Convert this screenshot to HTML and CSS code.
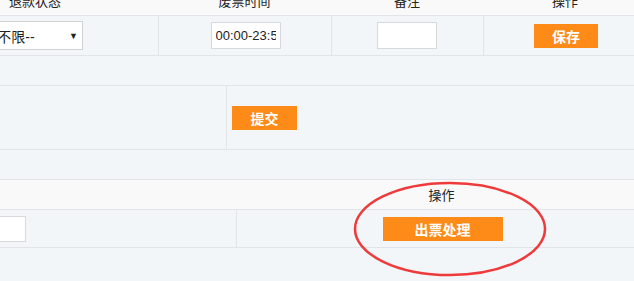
FILE: index.html
```html
<!DOCTYPE html>
<html>
<head>
    <meta charset="utf-8">
    <title>出票设置</title>
    <link rel="stylesheet" href="styles.css">
</head>
<body>
    <div class="page">
        <!-- 规则设置 -->
        <div class="grid grid-rule">
            <div class="cell head">退款状态</div>
            <div class="cell head">废票时间</div>
            <div class="cell head">备注</div>
            <div class="cell head">操作</div>

            <div class="cell row">
                <div class="fake-select"><span>--不限--</span><i>▼</i></div>
            </div>
            <div class="cell row line"><input class="ipt ipt-time" type="text" value="00:00-23:59"></div>
            <div class="cell row line"><input class="ipt ipt-note" type="text"></div>
            <div class="cell row line"><a class="btn btn-save">保存</a></div>
        </div>

        <!-- 提交 -->
        <div class="grid grid-submit">
            <div class="cell tall"></div>
            <div class="cell tall line left"><a class="btn btn-submit">提交</a></div>
        </div>

        <!-- 出票 -->
        <div class="grid grid-ticket">
            <div class="cell head"></div>
            <div class="cell head">操作</div>
            <div class="cell row2 right"><input class="ipt ipt-small" type="text"></div>
            <div class="cell row2 line"><a class="btn btn-ticket">出票处理</a></div>
        </div>
    </div>

    <!-- 标注圈 -->
    <svg class="mark" width="200" height="100" viewBox="0 0 200 100">
        <ellipse cx="97" cy="48" rx="95" ry="46" fill="none" stroke="#ee3a3a" stroke-width="2.5"/>
    </svg>
</body>
</html>
```

FILE: styles.css
```css
html {
    overflow: hidden;
}

body {
    margin: 0;
    min-height: 281px;
    background-color: #f3f6f9;
    font-family: "Liberation Sans", "Noto Sans CJK SC", sans-serif;
    font-size: 13px;
    color: #333;
    position: relative;
}

.page {
    width: 735px;
    margin: -14px 0 0 -88px;
}

.grid {
    display: grid;
    border-bottom: 1px solid #e1e4e8;
}

.grid-rule {
    grid-template-columns: 246px 173px 152px 164px;
    margin-bottom: 29px;
}

.grid-submit {
    grid-template-columns: 314px 421px;
    border-top: 1px solid #e1e4e8;
    margin-bottom: 29px;
}

.grid-ticket {
    grid-template-columns: 324px 411px;
    border-top: 1px solid #e1e4e8;
}

.cell {
    display: flex;
    align-items: center;
    justify-content: center;
}

.cell.line {
    border-left: 1px solid #e1e4e8;
}

.cell.left {
    justify-content: flex-start;
    padding-left: 5px;
}

.cell.right {
    justify-content: flex-end;
    padding-right: 210px;
}

.head {
    height: 29px;
    background-color: #f9f9f9;
    border-bottom: 1px solid #e1e4e8;
    font-family: "Noto Sans CJK SC", sans-serif;
    color: #222;
}

.row {
    height: 39px;
}

.row2 {
    height: 37px;
}

.tall {
    height: 63px;
}

.fake-select {
    width: 90px;
    height: 27px;
    margin-left: -2px;
    background: #fff;
    border: 1px solid #cfd3d8;
    display: flex;
    align-items: center;
    justify-content: space-between;
    padding: 0 4px 0 2px;
    font-size: 14px;
    color: #222;
}

.fake-select i {
    font-style: normal;
    font-size: 9px;
}

.ipt {
    height: 25px;
    padding: 0 4px;
    border: 1px solid #d6d9dd;
    background: #fff;
    font-family: "Liberation Sans", "Noto Sans CJK SC", sans-serif;
    font-size: 13px;
    color: #222;
    box-sizing: content-box;
    outline: none;
}

.ipt-time {
    width: 60px;
    margin-left: 1px;
}

.ipt-note {
    width: 50px;
    margin-left: -1px;
}

.ipt-small {
    width: 40px;
    height: 24px;
}

.btn {
    display: inline-block;
    height: 24px;
    line-height: 24px;
    background-color: #fe8a17;
    color: #fff;
    font-weight: bold;
    font-size: 14px;
    text-align: center;
    font-family: "Noto Sans CJK SC", sans-serif;
}

.btn-save {
    width: 64px;
    margin-left: 1px;
}

.btn-submit {
    width: 65px;
}

.btn-ticket {
    width: 120px;
    margin-left: 1px;
}

.mark {
    position: absolute;
    left: 353px;
    top: 181px;
}
```
